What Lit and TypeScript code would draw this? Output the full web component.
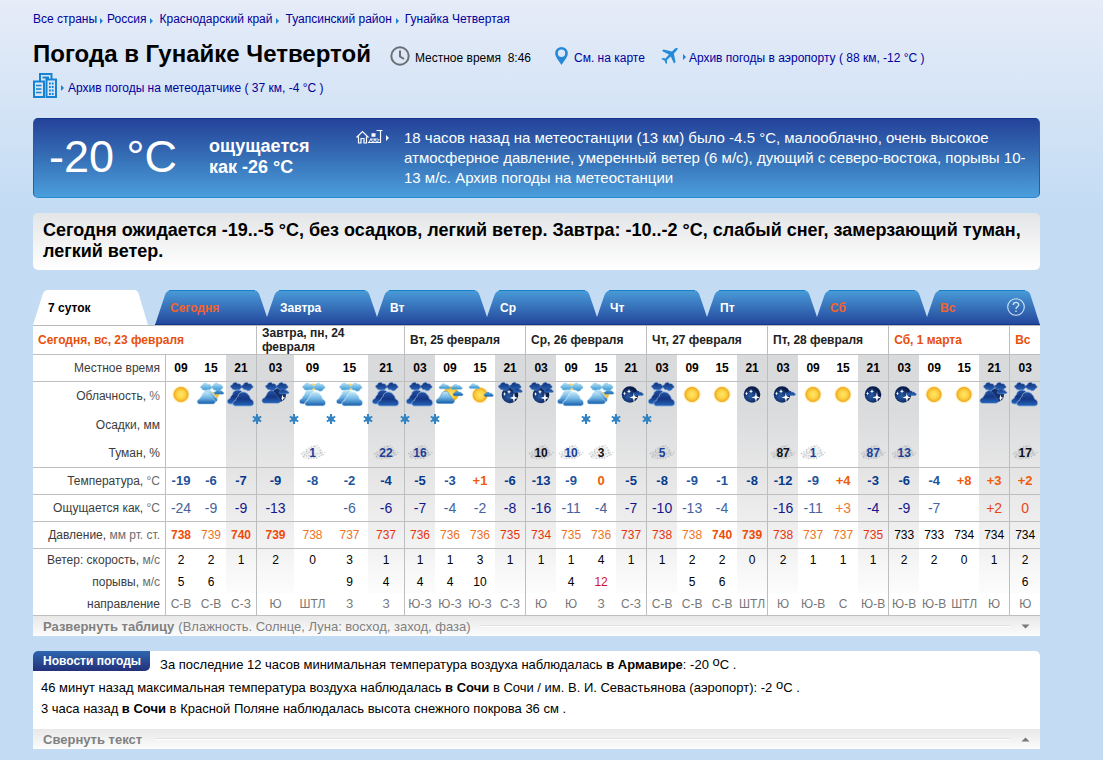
import { LitElement, html, svg, css, nothing } from "lit";
import { customElement, state } from "lit/decorators.js";
import { classMap } from "lit/directives/class-map.js";

type Sky = "sun" | "sunFew" | "partly" | "mostly" | "overcast" | "moon" | "moonFew" | "moonPartly" | "nightMostly" | "nightOvercast";

interface Hour {
  h: string;
  sky: Sky;
  snow?: boolean;
  fog?: string;
  fogDark?: boolean;
  t: string;
  feels: string;
  p: number;
  wind: number;
  gust?: number;
  dir: string;
}

interface Day {
  title: string;
  weekend?: boolean;
  hours: Hour[];
}

const hr = (h: string, sky: Sky, t: string, feels: string, p: number, wind: number, dir: string, extra: Partial<Hour> = {}): Hour =>
  ({ h, sky, t, feels, p, wind, dir, ...extra });

const DAYS: Day[] = [
  { title: "Сегодня, вс, 23 февраля", weekend: true, hours: [
    hr("09", "sun", "-19", "-24", 738, 2, "С-В", { gust: 5 }),
    hr("15", "mostly", "-6", "-9", 739, 2, "С-В", { gust: 6 }),
    hr("21", "nightOvercast", "-7", "-9", 740, 1, "С-З", { snow: true }),
  ] },
  { title: "Завтра, пн, 24 февраля", hours: [
    hr("03", "nightMostly", "-9", "-13", 739, 2, "Ю", { snow: true }),
    hr("09", "overcast", "-8", "", 738, 0, "ШТЛ", { snow: true, fog: "1" }),
    hr("15", "overcast", "-2", "-6", 737, 3, "З", { snow: true, gust: 9 }),
    hr("21", "nightOvercast", "-4", "-6", 737, 1, "З", { snow: true, fog: "22", gust: 4 }),
  ] },
  { title: "Вт, 25 февраля", hours: [
    hr("03", "nightOvercast", "-5", "-7", 736, 1, "Ю-З", { snow: true, fog: "16", gust: 4 }),
    hr("09", "partly", "-3", "-4", 736, 1, "Ю-З", { gust: 4 }),
    hr("15", "sunFew", "+1", "-2", 736, 3, "Ю-З", { gust: 10 }),
    hr("21", "moonPartly", "-6", "-8", 735, 1, "С-З"),
  ] },
  { title: "Ср, 26 февраля", hours: [
    hr("03", "moonPartly", "-13", "-16", 734, 1, "Ю", { fog: "10", fogDark: true }),
    hr("09", "overcast", "-9", "-11", 735, 1, "Ю", { snow: true, fog: "10", gust: 4 }),
    hr("15", "mostly", "0", "-4", 736, 4, "З", { snow: true, fog: "3", fogDark: true, gust: 12 }),
    hr("21", "moonFew", "-5", "-7", 737, 1, "С-З", { snow: true }),
  ] },
  { title: "Чт, 27 февраля", hours: [
    hr("03", "nightOvercast", "-8", "-10", 738, 1, "С-В", { fog: "5" }),
    hr("09", "sun", "-9", "-13", 738, 2, "С-В", { gust: 5 }),
    hr("15", "sun", "-1", "-4", 740, 2, "С-В", { gust: 6 }),
    hr("21", "moon", "-8", "", 739, 0, "ШТЛ"),
  ] },
  { title: "Пт, 28 февраля", hours: [
    hr("03", "moonFew", "-12", "-16", 738, 2, "Ю", { fog: "87", fogDark: true }),
    hr("09", "sun", "-9", "-11", 737, 1, "Ю-В", { fog: "1" }),
    hr("15", "sun", "+4", "+3", 737, 1, "С"),
    hr("21", "moon", "-3", "-4", 735, 1, "Ю-В", { fog: "87" }),
  ] },
  { title: "Сб, 1 марта", weekend: true, hours: [
    hr("03", "moonFew", "-6", "-9", 733, 2, "Ю-В", { fog: "13" }),
    hr("09", "sun", "-4", "-7", 733, 2, "Ю-В"),
    hr("15", "sun", "+8", "", 734, 0, "ШТЛ"),
    hr("21", "nightMostly", "+3", "+2", 734, 1, "Ю"),
  ] },
  { title: "Вс", weekend: true, hours: [
    hr("03", "nightOvercast", "+2", "0", 734, 2, "Ю", { gust: 6, fog: "17", fogDark: true }),
  ] },
];

const TABS = ["Сегодня", "Завтра", "Вт", "Ср", "Чт", "Пт", "Сб", "Вс"];
const COLUMNS = [133, 30, 30, 31, 37, 37, 37, 37, 30, 30, 30, 31, 30, 30, 30, 31, 30, 30, 30, 31, 30, 30, 30, 31, 30, 30, 30, 31, 30];

const isNight = (h: Hour) => h.h === "21" || h.h === "03";

/* Sky icons, drawn in a 30 by 26 box */
const bigCloud = (x: number, y: number, fill: string, edge: string) => svg`
  <path transform=${`translate(${x} ${y})`} fill=${fill} stroke=${edge} stroke-width="0.8"
    d="M3 14.5C-.5 14.5-.5 9.5 3 9C3.500 7 4.500 6 5.500 5C6-.5 14-.8 15.500 3C17 3.500 17.500 5.500 18 7.500C22 8.500 22.500 14.500 18 14.500Z"/>`;
const midCloud = (x: number, y: number, fill: string, edge: string) => svg`
  <path transform=${`translate(${x} ${y})`} fill=${fill} stroke=${edge} stroke-width="0.6"
    d="M2.500 12.500C-.6 12.500-.6 8 2.800 7.500C3.500 6 4.500 5 5 4C6-.8 12-.8 13 2.800C14 4.500 15.500 5.500 16 7.500C19.300 8 19 12.500 16 12.500Z"/>`;
const smallCloud = (x: number, y: number, fill: string, edge: string, k = 1) => svg`
  <path transform=${`translate(${x} ${y}) scale(${k})`} fill=${fill} stroke=${edge} stroke-width="0.5"
    d="M2 6.500C-.5 6.500-.5 3 2.300 3C3 .2 7 .2 7.500 2.500C9.500 1.800 11 3 10.800 3.800C13.300 4 12.800 6.500 11 6.500Z"/>`;
const puff = (x: number, y: number, fill: string, edge: string) => svg`
  <path transform=${`translate(${x} ${y})`} fill=${fill} stroke=${edge} stroke-width="0.5"
    d="M2 5.500C-.2 5 .2 2.500 2.300 2.500C3-.5 7-.5 7.500 1.500C9.500 .6 11 2 10.800 3C12.800 3.500 12.300 5.800 10.500 5.800C10 8.500 6 9 5 7C3.500 7.500 2 7 2 5.500Z"/>`;
const sun = (x: number, y: number, r: number) => svg`
  <circle cx=${x} cy=${y} r=${r + 1.6} fill="#ffe680" opacity="0.45"/>
  <circle cx=${x} cy=${y} r=${r} fill="url(#g-sun)" stroke="#eda41c" stroke-width="0.7"/>`;
const moon = (x: number, y: number) => svg`
  <circle cx=${x} cy=${y} r="8.300" fill="url(#g-moon)"/>
  <path transform=${`translate(${x} ${y})`} fill="#fff"
    d="M4-2.500L4.800 1.700L8 3L4.800 4L4 8L3 4L-.5 3L3 1.700ZM-1-5.500L-.4-3.700L1-3.200L-.4-2.600L-1-1L-1.600-2.600L-3-3.200L-1.600-3.700ZM-5.500-3L-5-1.500L-4-1L-5-.5L-5.500 1L-6-.5L-7-1L-6-1.500Z"/>`;

const L = "url(#g-light)";
const M = "url(#g-small)";
const N = "url(#g-night)";
const D = "url(#g-dark)";
const skyArt: Record<Sky, () => unknown> = {
  sun: () => sun(15, 12.5, 7.2),
  sunFew: () => svg`${sun(15, 13, 7)}${smallCloud(4, 1, M, "#7db9e2", 0.85)}${smallCloud(19, 9.5, "url(#g-deep)", "#2f78bd", 0.75)}`,
  partly: () => svg`${sun(16, 12, 7)}${smallCloud(4, 1, M, "#7db9e2", 0.9)}${smallCloud(16, 1.5, M, "#7db9e2", 0.9)}${smallCloud(18, 8.5, "url(#g-deep)", "#2f78bd", 0.8)}${midCloud(1, 9, L, "#4d97d2")}`,
  mostly: () => svg`<path d="M15 10H24L22 16L18 19Z" fill="#f7c431"/>${puff(4, 1, M, "#9fd0ee")}${puff(15, 1, M, "#9fd0ee")}${smallCloud(18, 7, "url(#g-deep)", "#8cc4ea", 0.8)}${midCloud(3, 7.5, L, "#c5e4f6")}${midCloud(1, 9.5, L, "#a4d4f2")}`,
  overcast: () => svg`<circle cx="15" cy="5" r="3.500" fill="#f9d964"/>${puff(4, 1, M, "#9fd0ee")}${puff(15, 1, M, "#9fd0ee")}${bigCloud(1, 7.5, L, "#d6eefb")}${bigCloud(6.5, 9.5, L, "#d6eefb")}`,
  moon: () => moon(15, 12.5),
  moonFew: () => svg`${moon(14, 12.5)}${smallCloud(18, 8.5, "url(#g-night)", "#2a5fae", 0.75)}`,
  moonPartly: () => svg`${moon(15, 13)}${puff(3, 0.5, N, "#4a78be")}${puff(14, 0.5, N, "#4a78be")}${smallCloud(18, 5.5, N, "#4a78be", 0.75)}`,
  nightMostly: () => svg`<circle cx="18" cy="13" r="7" fill="#14306f"/>${puff(4, 0.5, N, "#5f8fd0")}${puff(15, 0.5, N, "#5f8fd0")}${smallCloud(18, 6.5, N, "#5f8fd0", 0.8)}<path d="M21.500 12.500L22.200 15L24.500 16L22.200 16.800L21.500 19L20.500 16.500Z" fill="#fff"/>${midCloud(1, 8.500, D, "#3a6bb8")}`,
  nightOvercast: () => svg`${puff(4, 0.5, N, "#5f8fd0")}${puff(15, 0.5, N, "#5f8fd0")}${bigCloud(1, 7.5, D, "#8db4e2")}${bigCloud(6.5, 9.5, D, "#8db4e2")}`,
};

@customElement("app-root")
export class AppRoot extends LitElement {
  @state() private tab = -1;

  static styles = css`
    :host {
      display: block;
      min-height: 100vh;
      box-sizing: border-box;
      padding: 12px 63px 11px 33px;
      background: #c3dcf4 linear-gradient(#e6ecf8, #c3dcf4) no-repeat 0 0 / 100% 210px;
      font: 12px/14px "Liberation Sans", Arial, sans-serif;
      color: #000;
    }
    * { box-sizing: border-box; }
    a { color: #00009c; text-decoration: none; }
    button { font: inherit; border: 0; background: none; padding: 0; margin: 0; text-align: left; cursor: pointer; }
    svg { display: block; flex: none; }
    .defs { position: absolute; width: 0; height: 0; }
    .crumbs { display: flex; flex-wrap: wrap; align-items: center; }
    .crumbs .tri { margin: 4px 6px 0 4px; }
    .crumbs .tri:first-of-type { margin: 4px 4px 0 3px; }
    .head { display: flex; flex-wrap: wrap; align-items: center; margin-top: 8px; }
    h1 { margin: 0 19px 0 0; font-size: 24px; line-height: 40px; font-weight: bold; }
    .fact { display: flex; align-items: center; margin-right: 16px; padding-top: 3px; }
    .fact .txt { padding-top: 4px; white-space: pre; }
    .fact .tri { margin: 3px 3px 0 5px; }
    .clock { margin-right: 5px; }
    .pin { margin: 0 6px 0 8px; }
    .station { display: flex; align-items: center; width: 100%; margin-top: -1px; }
    .station .tri { margin: 4px 4px 0 4px; }
    .station .txt { padding-top: 4px; }

    .now {
      display: flex;
      min-height: 80px;
      margin-top: 20px;
      border: 1px solid;
      border-color: #12348c #1d5fb0 #2a8ad0;
      border-radius: 5px;
      background: linear-gradient(#24429a, #3670b6 50%, #4b9edc);
      color: #fff;
    }
    .temp { width: 175px; padding: 14px 0 0 15px; font-size: 45px; line-height: 48px; white-space: nowrap; flex: none; }
    .feel { width: 147px; padding-top: 17px; font-size: 18px; line-height: 21px; font-weight: bold; flex: none; }
    .hut { display: flex; align-items: flex-start; width: 48px; padding-top: 10px; flex: none; }
    .hut .tri { margin: 6px 0 0 3px; }
    .past { flex: 1; padding: 9px 10px 9px 0; font-size: 15px; line-height: 20px; color: inherit; }
    .summary {
      margin-top: 15px;
      padding: 7px 10px 8px;
      border-radius: 5px;
      background: linear-gradient(#e4e5e7, #fff);
      font-size: 18px;
      line-height: 21px;
      font-weight: bold;
    }

    .tabs {
      display: grid;
      grid-template-columns: 115fr 7fr 112fr repeat(6, 110fr) 113fr;
      margin-top: 20px;
      position: relative;
    }
    .tab { display: grid; height: 35px; font-weight: bold; color: #fff; align-items: center; }
    .tab svg, .tab span { grid-area: 1 / 1; }
    .tab svg { width: 100%; height: 35px; }
    .tab span { padding-left: 13px; }
    .tab.all { color: #000; }
    .tab.all span, .tab.first span { padding-left: 15px; }
    .tab.rest { color: #f4622a; }
    .gap { height: 35px; }
    .help { position: absolute; right: 15px; top: 8px; }

    table { width: 100%; table-layout: fixed; border-spacing: 0; border-top: 1px solid #bbb; background: #fff; }
    th, td { padding: 0; height: 22px; text-align: center; font-weight: normal; vertical-align: middle; white-space: nowrap; }
    .edge { border-right: 1px solid #bcbec0; }
    .line > * { border-bottom: 1px solid #bcbec0; }
    .days th { height: 29px; padding: 0 5px; text-align: left; font-weight: bold; white-space: normal; color: #222; }
    .days .off { color: #e8500c; }
    .lab { padding-right: 5px; text-align: right; color: #3c3c3c; }
    .lab span { color: #6c6c6c; }
    .row27 > * { height: 27px; }
    .row28 > * { height: 28px; }
    .row29 > * { height: 29px; }
    .row23 > * { height: 23px; }
    .sky { vertical-align: top; }
    .sky svg { margin: 0 auto; }
    .n-time { background: #d9dadc; }
    .n-sky { background: #dadbdd; }
    .n-snow { background: linear-gradient(#dadbdd, #e0e1e2); }
    .n-fog { background: linear-gradient(#e0e1e2, #e6e6e6); }
    .n-temp { background: linear-gradient(#e4e4e4, #e9e9ea); }
    .n-feels { background: linear-gradient(#e9e9ea, #eeeeee); }
    .n-press { background: linear-gradient(#ededee, #f3f3f3); }
    .n-wind { background: linear-gradient(#f1f1f2, #f8f8f8); }
    .n-gust { background: linear-gradient(#f8f8f8, #fcfcfc); }
    .time { font-weight: bold; }
    .flake { position: relative; }
    .flake svg { position: absolute; right: -5px; top: 4px; z-index: 1; }
    .edge.flake svg { right: -6px; }
    .fog { font-weight: bold; color: #1c3f98; }
    .fog.dark { color: #111; }
    .fog div { display: grid; place-items: center; }
    .fog svg, .fog span { grid-area: 1 / 1; }
    .t { font-size: 13px; font-weight: bold; color: #23539b; }
    .t.night { color: #063a8c; }
    .f { font-size: 14px; color: #44639f; }
    .f.night { color: #16168c; }
    .t.plus { color: #ee5c0c; }
    .f.plus { color: #ee7a35; }
    .f.plus.night { color: #e84414; }
    .p { color: #ec7326; }
    .p.night { color: #e5340e; }
    .p.high { font-weight: bold; color: #ec4c0a; }
    .p.norm { color: #000; }
    .strong { color: #d0102c; }
    .dir { color: #777; }
    .bar {
      display: flex;
      align-items: center;
      width: 100%;
      height: 20px;
      padding: 0 10px;
      background: linear-gradient(#e8e8e9, #fcfcfc);
      font-size: 13px;
      line-height: 15px;
      color: #808080;
    }
    .bar .rule { flex: 1; height: 2px; margin: 0 11px 0 10px; border-top: 1px solid #e0e0e0; background: #fff; }
    .bar b { margin-right: 4px; }

    .news { margin-top: 15px; padding-bottom: 10px; background: #fff; border-radius: 5px 5px 0 0; font-size: 13px; }
    .first-news { display: flex; align-items: flex-start; }
    .badge {
      margin: 0;
      padding: 0 9px 0 10px;
      border-radius: 5px 0 5px 0;
      background: linear-gradient(#2e66b0, #23307a);
      color: #fff;
      font-size: 12px;
      line-height: 20px;
    }
    .news p { margin: 0; padding: 0 8px; line-height: 21px; }
    .first-news p { padding: 3px 10px 2px; }
    .news sup { font-size: 13px; line-height: 0; vertical-align: 3px; }
  `;

  private tri(fill = "#1c7fd0") {
    return html`<svg class="tri" width="3" height="6" viewBox="0 0 3 6" aria-hidden="true"><path d="M0 0L3 3L0 6Z" fill=${fill}/></svg>`;
  }

  private night(h: Hour, name: string) {
    return isNight(h) ? name : "";
  }

  private row(cls: string, label: unknown, cell: (h: Hour, edge: string) => unknown) {
    return html`<tr class=${cls}>
      <th class="lab edge" scope="row">${label}</th>
      ${DAYS.map((d, di) => d.hours.map((h, i) => cell(h, i === d.hours.length - 1 && di < DAYS.length - 1 ? "edge" : "")))}
    </tr>`;
  }

  private tabShape(first: boolean, last: boolean) {
    const w = first ? 112 : last ? 113 : 110;
    const s = first ? 2 : 0;
    const left = first ? "M0 35L10 5" : "M0 35V27L7.500 5";
    const end = last ? `H${w - 15}Q${w - 11} .5 ${w - 9.5} 5L${w} 35Z` : `H${w - 12}Q${w - 9} .5 ${w - 7.5} 5L${w} 27V35Z`;
    const d = `${left}Q${9.5 + s} .5 ${13 + s} .5${end}`;
    return html`<svg viewBox="0 0 ${w} 35" preserveAspectRatio="none" aria-hidden="true">
      <path d=${d} fill="url(#g-tab)"/>
      <path d=${`M${12 + s} .5H${last ? w - 15 : w - 12}`} stroke="#1583cc" fill="none"/>
      <path d=${`M0 34.500H${w}`} stroke="#12348c" fill="none"/>
    </svg>`;
  }

  private cloudFog = html`<svg width="26" height="18" viewBox="0 0 26 18" aria-hidden="true">
    <path fill="#9aa0a8" opacity="0.16" d="M2 12C1 9 4 7 6 8C6 4 9 3 11 4C13 .5 17 1 18 4C21 4 24 7 23 10C22 13 19 13 17 13C13 16 10 15 9 14C6 16 2 15 2 12Z"/>
    <g fill="none" stroke="#8d939b" stroke-width="1.300" stroke-dasharray="1.200 1.600" opacity="0.45">
      <path d="M1 10Q5 6 8 8T14 4T20 6T25 8M3 13Q8 10 12 13T23 10M6 6Q11 2 16 2M8 15Q13 12 18 15M4 11Q9 7 13 9T22 8"/>
    </g>
  </svg>`;

  private flake = html`<svg width="10" height="10" viewBox="0 0 10 10" aria-hidden="true">
    <path d="M5 0V10M.8 2.500L9.200 7.500M.8 7.500L9.200 2.500" stroke="#3383c2" stroke-width="2"/><circle cx="5" cy="5" r="2.800" fill="#3383c2"/>
  </svg>`;

  render() {
    return html`
      <svg class="defs" aria-hidden="true"><defs>
        <linearGradient id="g-tab" x2="0" y2="1"><stop stop-color="#4a9bd8"/><stop offset="1" stop-color="#23459a"/></linearGradient>
        <linearGradient id="g-light" x2="0" y2="1"><stop stop-color="#c4e8f8"/><stop offset=".5" stop-color="#6fb4e3"/><stop offset="1" stop-color="#1459a8"/></linearGradient>
        <linearGradient id="g-small" x2="0" y2="1"><stop stop-color="#b0dff4"/><stop offset="1" stop-color="#2c8fd0"/></linearGradient>
        <linearGradient id="g-deep" x2="0" y2="1"><stop stop-color="#5aaee2"/><stop offset="1" stop-color="#1a63b0"/></linearGradient>
        <linearGradient id="g-night" x2="0" y2="1"><stop stop-color="#12337a"/><stop offset="1" stop-color="#2a66ba"/></linearGradient>
        <linearGradient id="g-dark" x2="0" y2="1"><stop stop-color="#2452a2"/><stop offset=".5" stop-color="#153683"/><stop offset="1" stop-color="#2466bb"/></linearGradient>
        <radialGradient id="g-sun"><stop stop-color="#ffe766"/><stop offset=".6" stop-color="#fcd043"/><stop offset="1" stop-color="#f2ab1f"/></radialGradient>
        <radialGradient id="g-moon" cx=".4" cy=".6"><stop stop-color="#2a5da6"/><stop offset=".6" stop-color="#173a7a"/><stop offset="1" stop-color="#0a1c48"/></radialGradient>
      </defs></svg>

      <nav class="crumbs">
        <a href="#">Все страны</a>${this.tri()}
        <a href="#">Россия</a>${this.tri()}
        <a href="#">Краснодарский край</a>${this.tri()}
        <a href="#">Туапсинский район</a>${this.tri()}
        <a href="#">Гунайка Четвертая</a>
      </nav>

      <header class="head">
        <h1>Погода в Гунайке Четвертой</h1>
        <div class="fact">
          <svg class="clock" width="20" height="20" viewBox="0 0 20 20" fill="none" stroke="#6b6f73" stroke-width="2" aria-hidden="true"><circle cx="10" cy="10" r="8.700"/><path d="M10 4.500V10.500L14 13"/></svg>
          <span class="txt">Местное время  8:46</span>
        </div>
        <div class="fact">
          <svg class="pin" width="13" height="18" viewBox="0 0 13 18" aria-hidden="true"><path fill="#2389d8" fill-rule="evenodd" d="M6.500 0A6.300 6.300 0 0 1 12.800 6.300C12.800 10 9 14 6.500 18C4 14 .2 10 .2 6.300A6.300 6.300 0 0 1 6.500 0ZM6.500 2.600A3.700 3.700 0 1 0 6.500 10A3.700 3.700 0 1 0 6.500 2.600Z"/></svg>
          <a class="txt" href="#">См. на карте</a>
        </div>
        <div class="fact">
          <svg width="17" height="16" viewBox="0 0 17 16" aria-hidden="true"><path fill="#2389d8" d="M16.500 .3C15.500-.3 14 .5 13 1.500L11 3.500L2.500 1.500L1 3L8 6.500L4.500 10.500L1.500 10L.3 11L3.500 12.500L5 16L6.200 15L5.800 12L9.800 8.500L13 15.500L14.500 14L12.800 5.500L15 3.300C16.200 2 17.200 .9 16.500 .3Z"/></svg>
          ${this.tri()}<a class="txt" href="#">Архив погоды в аэропорту ( 88 км, -12 °C )</a>
        </div>
        <div class="station">
          <svg width="24" height="25" viewBox="0 0 24 25" fill="none" stroke="#1583d2" stroke-width="2" aria-hidden="true">
            <path d="M1 8.500H11V24H1ZM13.500 6.500H23V24H13.500ZM7 8V1H18.500V6.500M9.500 4.500H16"/>
            <path d="M3 12.500H8.500M3 16H8.500M3 19.500H8.500" stroke-width="1.700"/>
            <path d="M16 10.500H21M16 14H21M16 17.500H21M16 21H21" stroke-dasharray="1.800 1" stroke-width="1.800"/>
          </svg>
          ${this.tri()}<a class="txt" href="#">Архив погоды на метеодатчике ( 37 км, -4 °C )</a>
        </div>
      </header>

      <section class="now">
        <div class="temp">-20 °C</div>
        <div class="feel">ощущается<br>как -26 °C</div>
        <div class="hut">
          <svg width="27" height="16" viewBox="0 0 27 16" fill="none" stroke="#fff" stroke-width="1.200" aria-hidden="true">
            <path d="M.5 8.500L6.500 2.500L12.500 8.500M2.500 7.500V14H5V9.500H8V14H10.500V7.500"/>
            <path d="M24.500 14V1M20.500 1.500H26.500M12 13.500H24.500"/>
            <path d="M15.500 6H19.500" stroke-width="3.500"/>
            <path d="M12.500 14L15 10L17 14L19 10L21 14L23 10M14 10H22" stroke-width="0.900"/>
          </svg>
          ${this.tri("#fff")}
        </div>
        <a class="past" href="#">18 часов назад на метеостанции (13 км) было -4.5 °C, малооблачно, очень высокое атмосферное давление, умеренный ветер (6 м/с), дующий с северо-востока, порывы 10-13 м/с. Архив погоды на метеостанции</a>
      </section>

      <section class="summary">Сегодня ожидается -19..-5 °C, без осадков, легкий ветер. Завтра: -10..-2 °C, слабый снег, замерзающий туман, легкий ветер.</section>

      <nav class="tabs">
        <button class="tab all" @click=${() => (this.tab = -1)}>
          <svg viewBox="0 0 115 35" preserveAspectRatio="none" aria-hidden="true"><path d="M0 35L9.500 5Q11 0 15 0H101Q105 0 106 5L115 35Z" fill="#fff"/></svg>
          <span>7 суток</span>
        </button>
        <div class="gap"></div>
        ${TABS.map((t, i) => html`<button @click=${() => (this.tab = i)}
          class=${classMap({ tab: true, first: i === 0, rest: i === 0 || i > 5 })}>
          ${this.tabShape(i === 0, i === TABS.length - 1)}<span>${t}</span></button>`)}
        <a class="help" href="#" aria-label="Справка">
          <svg width="18" height="18" viewBox="0 0 18 18" fill="none" stroke="#cfe4f8" stroke-width="1.100" aria-hidden="true"><circle cx="9" cy="9" r="8.300"/><path stroke-width="1.400" d="M6.300 7C6.300 3.500 11.700 3.500 11.700 6.800C11.700 8.800 9 8.700 9 11M9 12.500V14"/></svg>
        </a>
      </nav>

      <table>
        <colgroup>${COLUMNS.map((w) => html`<col style="width:${w}px">`)}</colgroup>
        <thead>
          <tr class="days line">
            ${DAYS.map((d, i) => html`<th scope="colgroup" colspan=${d.hours.length + (i === 0 ? 1 : 0)}
              class=${classMap({ off: !!d.weekend, edge: i < DAYS.length - 1 })}>${d.title}</th>`)}
          </tr>
        </thead>
        <tbody>
          ${this.row("row27 line", "Местное время", (h, e) => html`<td class="time ${e} ${this.night(h, "n-time")}">${h.h}</td>`)}
          ${this.row("row28", html`Облачность, <span>%</span>`, (h, e) => html`<td class="sky ${e} ${this.night(h, "n-sky")}"><svg width="30" height="26" viewBox="0 0 30 26" aria-hidden="true">${skyArt[h.sky]()}</svg></td>`)}
          ${this.row("row29", "Осадки, мм", (h, e) => html`<td class="flake ${e} ${this.night(h, "n-snow")}">${h.snow ? this.flake : nothing}</td>`)}
          ${this.row("row29 line", "Туман, %", (h, e) => html`<td class="fog ${h.fogDark ? "dark" : ""} ${e} ${this.night(h, "n-fog")}">${h.fog ? html`<div>${this.cloudFog}<span>${h.fog}</span></div>` : nothing}</td>`)}
          ${this.row("row27 line", html`Температура, <span>°C</span>`, (h, e) => html`<td class="t ${Number(h.t) >= 0 ? "plus" : ""} ${e} ${this.night(h, "night n-temp")}">${h.t}</td>`)}
          ${this.row("row27 line", html`Ощущается как, <span>°C</span>`, (h, e) => html`<td class="f ${Number(h.feels) >= 0 ? "plus" : ""} ${e} ${this.night(h, "night n-feels")}">${h.feels}</td>`)}
          ${this.row("row27 line", html`Давление, <span>мм рт. ст.</span>`, (h, e) => html`<td class="p ${this.pressure(h)} ${e} ${this.night(h, "night n-press")}">${h.p}</td>`)}
          ${this.row("", html`Ветер: скорость, <span>м/с</span>`, (h, e) => html`<td class="${e} ${this.night(h, "n-wind")}">${h.wind}</td>`)}
          ${this.row("", html`порывы, <span>м/с</span>`, (h, e) => html`<td class="${(h.gust ?? 0) > 10 ? "strong" : ""} ${e} ${this.night(h, "n-gust")}">${h.gust ?? nothing}</td>`)}
          ${this.row("row23 line", "направление", (h, e) => html`<td class="dir ${e}">${h.dir}</td>`)}
        </tbody>
      </table>
      <button class="bar"><b>Развернуть таблицу</b>(Влажность. Солнце, Луна: восход, заход, фаза)<span class="rule"></span>
        <svg width="9" height="5" viewBox="0 0 9 5" aria-hidden="true"><path d="M.5 .5H8.500L4.500 4.500Z" fill="#777"/></svg>
      </button>

      <section class="news">
        <div class="first-news">
          <h2 class="badge">Новости погоды</h2>
          <p>За последние 12 часов минимальная температура воздуха наблюдалась <b>в Армавире</b>: -20 <sup>o</sup>C .</p>
        </div>
        <p>46 минут назад максимальная температура воздуха наблюдалась <b>в Сочи</b> в Сочи / им. В. И. Севастьянова (аэропорт): -2 <sup>o</sup>C .</p>
        <p>3 часа назад <b>в Сочи</b> в Красной Поляне наблюдалась высота снежного покрова 36 см .</p>
      </section>
      <button class="bar"><b>Свернуть текст</b><span class="rule"></span>
        <svg width="9" height="5" viewBox="0 0 9 5" aria-hidden="true"><path d="M.5 4.500H8.500L4.500 .5Z" fill="#777"/></svg>
      </button>
    `;
  }

  private pressure(h: Hour) {
    if (h.p < 734 || (h.p === 734 && h.t !== "-13")) return "norm";
    if (h.p > 739 || (h.p === 739 && isNight(h)) || (h.p === 738 && h.t === "-19")) return "high";
    return "";
  }
}
